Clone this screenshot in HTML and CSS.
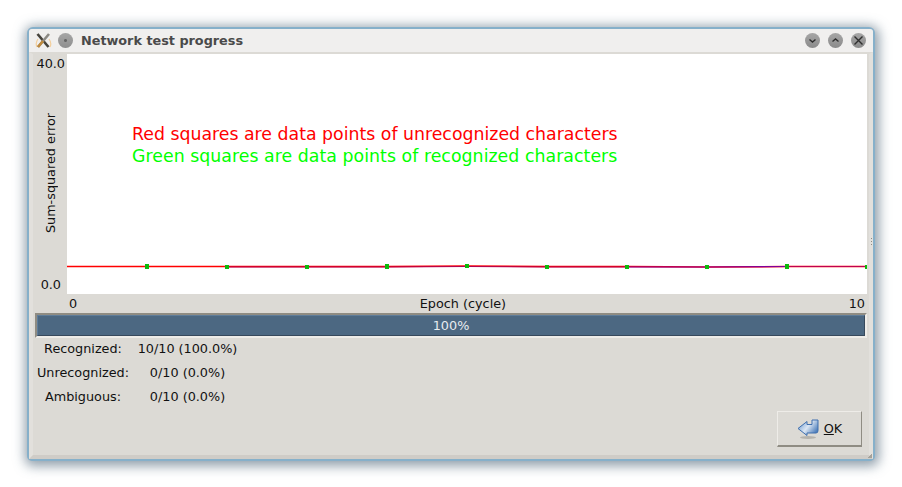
FILE: index.html
```html
<!DOCTYPE html>
<html lang="en">
<head>
  <meta charset="UTF-8" />
  <title>Network test progress</title>
  <link rel="stylesheet" href="styles.css">
</head>
<body>

  <div class="window">
    <div class="titlebar">
      <svg class="app-icon" width="17" height="17" viewBox="0 0 17 17">
        <path d="M2 15q-2-4 1-8M15 15q2-4-1-8" stroke="#f3cf9c" stroke-width="1.2" fill="none" />
        <path d="M2.5 2l11 13" stroke="#45433c" stroke-width="2.6" fill="none" />
        <path d="M14 2L3 15" stroke="#8b8983" stroke-width="2.6" fill="none" />
        <path d="M8 9l-5 6" stroke="#c08a3c" stroke-width="2.6" fill="none" />
      </svg>
      <span class="pin"></span>
      <span class="title">Network test progress</span>
      <span class="win-buttons">
        <span class="win-btn">
          <svg width="15" height="15" viewBox="0 0 15 15"><path d="M4.5 6.5l3 2.5 3-2.5" stroke="#2e2e2e" stroke-width="1.4" fill="none" /></svg>
        </span>
        <span class="win-btn">
          <svg width="15" height="15" viewBox="0 0 15 15"><path d="M4.5 8.5l3-2.5 3 2.5" stroke="#2e2e2e" stroke-width="1.4" fill="none" /></svg>
        </span>
        <span class="win-btn">
          <svg width="15" height="15" viewBox="0 0 15 15"><path d="M3.5 3.5l8 8M11.5 3.5l-8 8" stroke="#2e2e2e" stroke-width="1.4" fill="none" /></svg>
        </span>
      </span>
    </div>

    <div class="client">
      <div class="chart">
        <div class="y-axis">
          <span class="y-max">40.0</span>
          <span class="y-title">Sum-squared error</span>
          <span class="y-min">0.0</span>
        </div>
        <div class="plot">
          <p class="legend legend-red">Red squares are data points of unrecognized characters</p>
          <p class="legend legend-green">Green squares are data points of recognized characters</p>
          <svg class="curve" width="800" height="240" viewBox="0 0 800 240">
            <polyline points="0,212.5 80,212.5 160,212.5 240,212.5 320,212.5 400,212 480,212.5 560,212.5 640,213 720,212.5 800,212.5" fill="none" stroke="#ff0000" stroke-width="1.5" />
            <polyline points="160,213 240,213 320,213 400,212.5 480,213 560,213" fill="none" stroke="#b00050" stroke-width="1" />
            <polyline points="560,213 640,213 720,212.5" fill="none" stroke="#80009a" stroke-width="1.2" />
            <polyline points="720,212.5 800,212.5" fill="none" stroke="#c00050" stroke-width="1.2" />
            <g fill="#0cba0c">
              <rect x="78" y="210" width="4" height="5" />
              <rect x="158" y="211" width="4" height="4" />
              <rect x="238" y="211" width="4" height="4" />
              <rect x="318" y="210" width="4" height="5" />
              <rect x="398" y="210" width="4" height="4" />
              <rect x="478" y="211" width="4" height="4" />
              <rect x="558" y="211" width="4" height="4" />
              <rect x="638" y="211" width="4" height="4" />
              <rect x="718" y="210" width="4" height="5" />
              <rect x="798" y="211" width="4" height="4" />
            </g>
          </svg>
        </div>
        <div class="x-axis">
          <span>0</span>
          <span>Epoch (cycle)</span>
          <span>10</span>
        </div>
      </div>

      <div class="progress">
        <div class="progress-fill">100%</div>
      </div>

      <div class="stats">
        <span>Recognized:</span><span>10/10 (100.0%)</span>
        <span>Unrecognized:</span><span>0/10 (0.0%)</span>
        <span>Ambiguous:</span><span>0/10 (0.0%)</span>
      </div>

      <div class="actions">
        <button class="ok-btn">
          <svg width="22" height="22" viewBox="0 0 22 22">
            <defs>
              <linearGradient id="arrow-fill" x1="0" y1="0" x2="1" y2="0.6">
                <stop offset="0" stop-color="#5d8fcb" />
                <stop offset="0.55" stop-color="#dbe6f3" />
                <stop offset="1" stop-color="#4f7fbc" />
              </linearGradient>
            </defs>
            <ellipse cx="11" cy="19.5" rx="8" ry="1.5" fill="#b5b3ad" />
            <path d="M1 10.5L10 3.5V6.5H15V2H21V12.5Q21 15 19 15H10V17.5Z" fill="url(#arrow-fill)" stroke="#3f6fae" stroke-width="1" />
          </svg>
          <span><u>O</u>K</span>
        </button>
      </div>
    </div>

    <span class="grip"></span>
    <span class="corner"></span>
  </div>

</body>
</html>
```

FILE: styles.css
```css
html, body {
  margin: 0;
  background: #ffffff;
}
body {
  font-family: "DejaVu Sans", sans-serif;
  font-size: 12.8px;
  color: #111111;
  height: 487px;
  overflow: hidden;
}
.window {
  position: relative;
  box-sizing: border-box;
  width: 844px;
  height: 430px;
  margin: 29px 0 0 29px;
  background: #dcdad5;
  border-radius: 4px 4px 3px 3px;
  box-shadow: 0 0 0 2px #86b0ca, 1px 2px 12px 5px rgba(70, 95, 115, 0.6);
}
.titlebar {
  display: flex;
  align-items: center;
  height: 23px;
  padding: 0 7px 0 6px;
  background: #f0efee;
  border-radius: 3px 3px 0 0;
}
.app-icon {
  flex: none;
}
.pin {
  width: 15px;
  height: 15px;
  margin-left: 6px;
  border-radius: 50%;
  background: radial-gradient(circle, #666666 0, #666666 1px, transparent 2px), linear-gradient(#a6a6a6, #8e8e8e);
}
.title {
  margin-left: 8px;
  font-weight: bold;
  color: #4a4a4a;
}
.win-buttons {
  display: flex;
  gap: 8px;
  margin-left: auto;
}
.win-btn {
  display: block;
  width: 15px;
  height: 15px;
  border-radius: 50%;
  background: linear-gradient(#a6a6a6, #8a8a8a);
}
.win-btn svg {
  display: block;
}
.client {
  box-sizing: border-box;
  height: 407px;
  padding: 0 2px 0 0;
  border-top: 2px solid #dcdad5;
  border-left: 4px solid #e2e0dc;
  border-right: 4px solid #e2e0dc;
  border-bottom: 4px solid #cfccc7;
}
.chart {
  display: grid;
  grid-template-columns: 34px 800px;
  grid-template-rows: 240px 19px;
}
.y-axis {
  position: relative;
  display: flex;
  flex-direction: column;
  justify-content: space-between;
  align-items: flex-end;
  padding: 2px 2px 2px 0;
}
.y-min {
  margin-right: 4px;
}
.y-title {
  position: absolute;
  top: 59px;
  left: 10px;
  writing-mode: vertical-rl;
  transform: rotate(180deg);
}
.plot {
  position: relative;
  background: #ffffff;
  padding-top: 69px;
  padding-left: 65px;
}
.legend {
  margin: 0;
  font-size: 17.33px;
  line-height: 22px;
}
.legend-red {
  color: #ff0000;
}
.legend-green {
  color: #00ff00;
  letter-spacing: 0.04px;
}
.curve {
  position: absolute;
  top: 0;
  left: 0;
}
.x-axis {
  grid-column: 2;
  display: flex;
  justify-content: space-between;
  padding: 2px 2px 0 2px;
}
.progress {
  box-sizing: border-box;
  height: 25px;
  width: 832px;
  margin-left: 2px;
  border: 2px solid;
  border-color: #8f8c83 #eeece8 #eeece8 #8f8c83;
}
.progress-fill {
  box-sizing: border-box;
  height: 100%;
  background: #4c6882;
  border: 1px solid;
  border-color: #5f7d9a #37495c #37495c #5f7d9a;
  color: #e8ecf0;
  text-align: center;
  line-height: 19px;
}
.stats {
  display: grid;
  grid-template-columns: 92px 97px;
  grid-auto-rows: 24px;
  column-gap: 10px;
  justify-items: center;
  align-items: start;
  line-height: 16px;
  white-space: nowrap;
  margin-top: 3px;
  margin-left: 4px;
}
.actions {
  display: flex;
  justify-content: flex-end;
  margin-top: -2px;
  padding-right: 5px;
}
.ok-btn {
  display: flex;
  align-items: center;
  justify-content: center;
  gap: 5px;
  width: 85px;
  height: 36px;
  padding: 0;
  font-family: "DejaVu Sans", sans-serif;
  font-size: 12.8px;
  color: #111111;
  background: #dcdad5;
  border: 1px solid;
  border-color: #eeece8 #8f8c83 #8f8c83 #eeece8;
  border-bottom-width: 2px;
}
.grip {
  position: absolute;
  top: 209px;
  right: 1px;
  width: 1px;
  height: 9px;
  background: repeating-linear-gradient(#8f8c83 0, #8f8c83 1px, transparent 1px, transparent 3px);
}
.corner {
  position: absolute;
  right: 1px;
  bottom: 1px;
  width: 4px;
  height: 4px;
  background: linear-gradient(135deg, transparent 50%, #a5a29a 50%);
}
```
